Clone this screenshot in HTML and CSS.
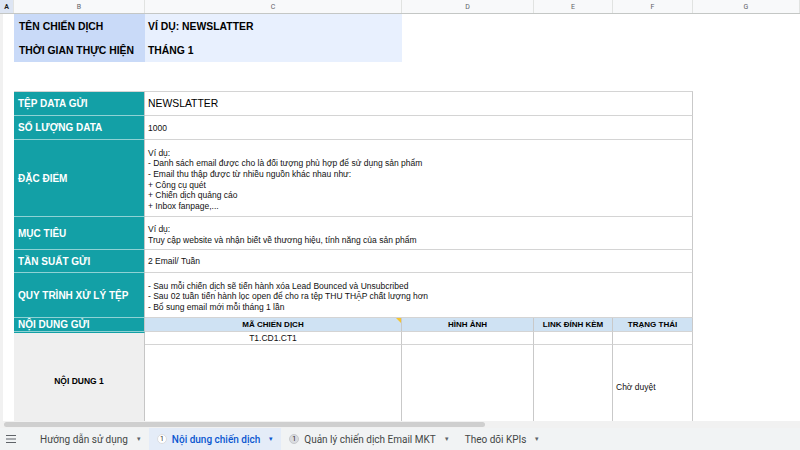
FILE: index.html
```html
<!DOCTYPE html>
<html lang="vi">
<head>
<meta charset="utf-8">
<title>Nội dung chiến dịch</title>
<link rel="stylesheet" href="styles.css">
</head>
<body>
<div class="app">
  <div class="colheads">
    <div class="ch ch-sel">A</div>
    <div class="ch">B</div>
    <div class="ch">C</div>
    <div class="ch">D</div>
    <div class="ch">E</div>
    <div class="ch">F</div>
    <div class="ch">G</div>
  </div>

  <div class="sheet">
    <div class="grid">
      <!-- campaign info -->
      <div class="cell b info-key">TÊN CHIẾN DỊCH</div>
      <div class="cell c info-val">VÍ DỤ: NEWSLATTER</div>
      <div class="cell b info-key">THỜI GIAN THỰC HIỆN</div>
      <div class="cell c info-val">THÁNG 1</div>
      <div class="spacer"></div>

      <!-- plan table -->
      <div class="cell b key first">TỆP DATA GỬI</div>
      <div class="cell cf val big first">NEWSLATTER</div>

      <div class="cell b key">SỐ LƯỢNG DATA</div>
      <div class="cell cf val">1000</div>

      <div class="cell b key">ĐẶC ĐIỂM</div>
      <div class="cell cf val multi">Ví dụ:<br>- Danh sách email được cho là đối tượng phù hợp để sử dụng sản phẩm<br>- Email thu thập được từ nhiều nguồn khác nhau như:<br>+ Công cụ quét<br>+ Chiến dịch quảng cáo<br>+ Inbox fanpage,...</div>

      <div class="cell b key">MỤC TIÊU</div>
      <div class="cell cf val multi">Ví dụ:<br>Truy cập website và nhận biết về thương hiệu, tính năng của sản phẩm</div>

      <div class="cell b key">TẦN SUẤT GỬI</div>
      <div class="cell cf val">2 Email/ Tuần</div>

      <div class="cell b key">QUY TRÌNH XỬ LÝ TỆP</div>
      <div class="cell cf val multi">- Sau mỗi chiến dịch sẽ tiến hành xóa Lead Bounced và Unsubcribed<br>- Sau 02 tuần tiến hành lọc open để cho ra tệp THU THẬP chất lượng hơn<br>- Bổ sung email mới mỗi tháng 1 lần</div>

      <div class="cell b key">NỘI DUNG GỬI</div>
      <div class="cell c head noted">MÃ CHIẾN DỊCH</div>
      <div class="cell d head">HÌNH ẢNH</div>
      <div class="cell e head">LINK ĐÍNH KÈM</div>
      <div class="cell f head">TRẠNG THÁI</div>

      <div class="cell b content-key">NỘI DUNG 1</div>
      <div class="cell c val center">T1.CD1.CT1</div>
      <div class="cell d val"></div>
      <div class="cell e val"></div>
      <div class="cell f val"></div>

      <div class="cell c val"></div>
      <div class="cell d val"></div>
      <div class="cell e val"></div>
      <div class="cell f val status">Chờ duyệt</div>
    </div>
  </div>

  <div class="hscroll"><div class="thumb"></div></div>

  <div class="tabs">
    <div class="menu">
      <svg width="12" height="10" viewBox="0 0 12 10"><path d="M1 1.5h10M1 5h10M1 8.5h10" stroke="#5f6368" stroke-width="1.2"/></svg>
    </div>
    <div class="tab">Hướng dẫn sử dụng <span class="caret">▾</span></div>
    <div class="tab active"><span class="badge">1</span>Nội dung chiến dịch <span class="caret">▾</span></div>
    <div class="tab"><span class="badge grey">1</span>Quản lý chiến dịch Email MKT <span class="caret">▾</span></div>
    <div class="tab">Theo dõi KPIs <span class="caret">▾</span></div>
  </div>
</div>
</body>
</html>
```
FILE: styles.css
```css
* { box-sizing: border-box; }

html, body {
  margin: 0;
  padding: 0;
  background: #ffffff;
}

.app {
  width: 800px;
  height: 450px;
  overflow: hidden;
  display: flex;
  flex-direction: column;
  font-family: "Liberation Sans", Arial, sans-serif;
  color: #000;
}

/* column letters */
.colheads {
  display: grid;
  grid-template-columns: 14px 131px 257px 132px 79px 80px 107px;
  height: 14px;
  flex: none;
  background: #f8f9fa;
  border-bottom: 1px solid #c4c7c5;
}

.ch {
  font-family: Roboto, "Liberation Sans", sans-serif;
  font-size: 7px;
  color: #5f6368;
  display: flex;
  align-items: center;
  justify-content: center;
  border-right: 1px solid #e1e3e1;
}

.ch-sel {
  background: #dde5f3;
  color: #1f1f1f;
  font-weight: 700;
}

/* sheet body */
.sheet {
  flex: none;
  height: 407px;
  overflow: hidden;
  border-left: 3px solid #f1f1f1;
}

.grid {
  display: grid;
  grid-template-columns: 11px 131px 257px 132px 79px 80px 107px;
  grid-template-rows: 24px 24px 29px 25px 24px 77px 33px 23px 45px 14px 13px 90px;
}

.b { grid-column: 2; }
.c { grid-column: 3; }
.cf { grid-column: 3 / 7; }
.d { grid-column: 4; }
.e { grid-column: 5; }
.f { grid-column: 6; }

.spacer { grid-column: 1 / -1; }

.cell {
  display: flex;
  align-items: center;
  min-width: 0;
  overflow: hidden;
  white-space: nowrap;
}

/* campaign info block */
.info-key {
  background: #c9daf8;
  font-size: 10.4px;
  font-weight: 700;
  padding-left: 5px;
}

.info-val {
  background: #e8f0fe;
  font-size: 10.4px;
  font-weight: 700;
  padding-left: 3px;
}

/* plan table */
.key {
  background: #13a0a6;
  color: #ffffff;
  font-size: 10px;
  font-weight: 700;
  padding-left: 4px;
  border-bottom: 1px solid #8fd2d4;
  border-right: 1px solid #c6c6c6;
}

.val {
  font-size: 8.5px;
  color: #111;
  padding-left: 3px;
  border-right: 1px solid #c9c9c9;
  border-bottom: 1px solid #d4d4d4;
}

.first { border-top: 1px solid #d4d4d4; }

.big { font-size: 10.4px; color: #000; }

.multi { line-height: 10.6px; padding-top: 3px; }

.center { justify-content: center; padding-left: 0; }

.status { padding-bottom: 6px; }

.head {
  background: #cfe2f3;
  font-size: 8px;
  font-weight: 700;
  justify-content: center;
  border-right: 1px solid #c9c9c9;
  border-bottom: 1px solid #d4d4d4;
  position: relative;
}

/* note marker in the corner of a header cell */
.noted::after {
  content: "";
  position: absolute;
  top: 0;
  right: 0;
  border-top: 5px solid #f4c430;
  border-left: 5px solid transparent;
}

.content-key {
  grid-row: span 2;
  background: #efefef;
  font-size: 8.5px;
  font-weight: 700;
  justify-content: center;
  padding-bottom: 6px;
  border-right: 1px solid #c6c6c6;
  border-top: 1px solid #13a0a6;
}

/* horizontal scrollbar */
.hscroll {
  flex: none;
  height: 7px;
  background: #f1f1f1;
  padding: 1px 0 0 4px;
}

.thumb {
  width: 481px;
  height: 5px;
  border-radius: 3px;
  background: #cfcfcf;
}

/* sheet tabs */
.tabs {
  flex: 1;
  display: flex;
  align-items: center;
  background: #f1f3f4;
  font-family: Roboto, "Liberation Sans", sans-serif;
  font-size: 10px;
  color: #444746;
}

.menu {
  width: 24px;
  padding-left: 5px;
  display: flex;
  align-items: center;
}

.tab {
  height: 100%;
  display: flex;
  align-items: center;
  padding: 0 8px;
  white-space: nowrap;
}

.tab:nth-child(2) { margin-left: 8px; }

.tab.active {
  background: #e4ecf8;
  color: #0b57d0;
  font-weight: 500;
}

.caret {
  font-size: 7px;
  margin-left: 9px;
  color: #5f6368;
}

.tab.active .caret { color: #0b57d0; }

.badge {
  width: 10px;
  height: 10px;
  border-radius: 50%;
  background: #ffffff;
  border: 1px solid #dadce0;
  color: #1f1f1f;
  font-size: 7px;
  font-weight: 400;
  display: inline-flex;
  align-items: center;
  justify-content: center;
  margin-right: 5px;
}

.badge.grey {
  background: #dadce0;
  border-color: #c8cacd;
}
```
